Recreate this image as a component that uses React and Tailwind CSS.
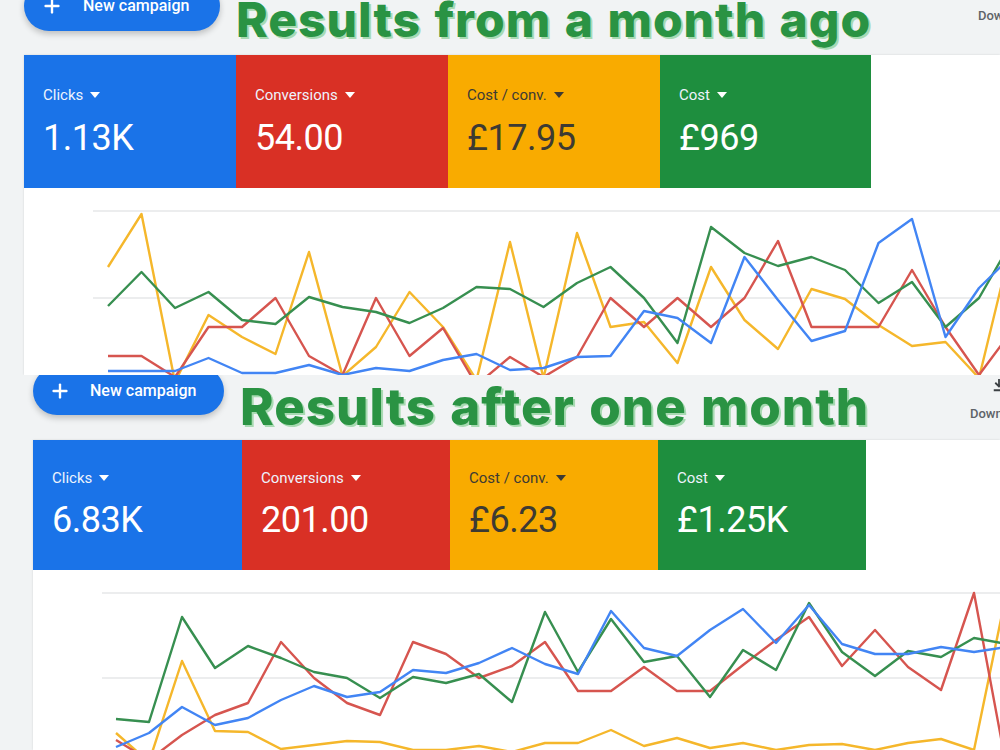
import { Plus } from "lucide-react"

const TOP = {
  x0: 108,
  step: 33.5,
  yellow: [267, 214, 382, 315, 337, 354, 252, 376, 347, 292, 327, 380, 242, 378, 233, 327, 322, 363, 267, 320, 349, 289, 299, 325, 346, 342, 378, 240],
  red: [356, 356, 377, 327, 327, 298, 356, 375, 298, 356, 328, 385, 357, 377, 357, 298, 327, 298, 327, 298, 241, 327, 327, 327, 270, 327, 375, 330],
  green: [306, 272, 308, 292, 320, 324, 297, 307, 312, 323, 308, 287, 289, 307, 283, 267, 298, 343, 227, 253, 266, 257, 270, 303, 282, 327, 298, 240],
  blue: [371, 371, 371, 358, 373, 373, 365, 375, 368, 371, 360, 354, 370, 368, 357, 356, 311, 318, 343, 257, 300, 341, 331, 243, 219, 337, 288, 255],
}

const BOTTOM = {
  x0: 116,
  step: 33,
  yellow: [733, 762, 661, 731, 732, 749, 745, 741, 742, 750, 750, 746, 752, 743, 743, 730, 746, 738, 748, 743, 750, 745, 744, 750, 743, 739, 750, 590],
  red: [740, 760, 735, 715, 703, 642, 678, 703, 715, 642, 654, 678, 666, 642, 691, 691, 667, 691, 691, 665, 640, 617, 666, 630, 667, 690, 593, 770],
  green: [719, 722, 617, 668, 646, 658, 672, 678, 698, 677, 683, 674, 702, 612, 672, 619, 662, 656, 697, 650, 670, 603, 652, 676, 651, 657, 638, 644],
  blue: [747, 733, 707, 725, 718, 700, 686, 697, 692, 670, 673, 663, 648, 664, 674, 611, 648, 656, 630, 609, 643, 605, 644, 654, 654, 647, 652, 647],
}

const LINE_COLORS = {
  yellow: "#f5b72b",
  red: "#d6554f",
  green: "#378f50",
  blue: "#4285f4",
}

function toPoints(series, x0, step) {
  return series.map((y, i) => `${x0 + step * i},${y}`).join(" ")
}

function Caret({ dark }) {
  return (
    <svg width="10" height="6" viewBox="0 0 10 6" className="shrink-0">
      <path d="M0 0h10L5 6z" fill={dark ? "#3d3a33" : "#ffffff"} />
    </svg>
  )
}

function Tile({ label, value, bg, width, pad, gap, dark }) {
  return (
    <div className={`${bg} ${width} ${pad} shrink-0 pl-[19px]`}>
      <div
        className={`flex items-center gap-[7px] text-[15px] leading-[20px] ${
          dark ? "text-[#3d3a33]" : "text-[#eef3fd]"
        }`}
      >
        <span>{label}</span>
        <Caret dark={dark} />
      </div>
      <div
        className={`${gap} text-[36px] leading-[40px] tracking-[-0.5px] ${
          dark ? "text-[#3d3a33]" : "text-white"
        }`}
      >
        {value}
      </div>
    </div>
  )
}

function DownloadIcon() {
  return (
    <svg width="18" height="18" viewBox="0 0 24 24" fill="none" stroke="#3c4043" strokeWidth="2.4">
      <path d="M12 4v10M7 9l5 5 5-5M5 19h14" />
    </svg>
  )
}

function Chart({ data, viewBox, width, height, gridY, gridX }) {
  return (
    <svg width={width} height={height} viewBox={viewBox} className="block shrink-0">
      {gridY.map((y) => (
        <line key={y} x1={gridX} x2="1000" y1={y} y2={y} stroke="#e6e7e9" strokeWidth="1.5" />
      ))}
      {["yellow", "red", "green", "blue"].map((key) => (
        <polyline
          key={key}
          points={toPoints(data[key], data.x0, data.step)}
          fill="none"
          stroke={LINE_COLORS[key]}
          strokeWidth="2.4"
          strokeLinejoin="round"
        />
      ))}
    </svg>
  )
}

export default function App() {
  return (
    <div className="w-[1000px] h-[750px] overflow-hidden bg-[#f1f3f4] font-['Roboto','Liberation_Sans',sans-serif]">
      {/* month-ago snapshot */}
      <section className="h-[375px] overflow-hidden pl-[24px]">
        <div className="flex items-start h-[55px]">
          <button className="shrink-0 w-[196px] h-[50px] mt-[-19px] rounded-full bg-[#1a73e8] shadow-[0_3px_6px_rgba(0,0,0,0.22)] flex items-center pl-[17px] gap-[20px] text-white">
            <Plus size={22} strokeWidth={2.6} />
            <span className="text-[16px] font-medium">New campaign</span>
          </button>
          <div className="shrink-0 w-[743px] ml-[16px] mt-[-4px] whitespace-nowrap font-['Inter',sans-serif] font-extrabold text-[48px] leading-none tracking-[1px] [word-spacing:2px] text-[#2a9343] [text-shadow:2px_2px_0_#a8dab2]">
            Results from a month ago
          </div>
          <div className="shrink-0 flex flex-col items-center mt-[-18px] ml-[-1px]">
            <DownloadIcon />
            <span className="mt-[6px] text-[13px] font-medium text-[#5f6368]">Download</span>
          </div>
        </div>
        <div className="bg-white shadow-[0_0_2px_rgba(0,0,0,0.12)]">
          <div className="flex h-[133px]">
            <Tile label="Clicks" value="1.13K" bg="bg-[#1a73e8]" width="w-[212px]" pad="pt-[30px]" gap="mt-[13px]" />
            <Tile label="Conversions" value="54.00" bg="bg-[#d93025]" width="w-[212px]" pad="pt-[30px]" gap="mt-[13px]" />
            <Tile label="Cost / conv." value="£17.95" bg="bg-[#f9ab00]" width="w-[212px]" pad="pt-[30px]" gap="mt-[13px]" dark />
            <Tile label="Cost" value="£969" bg="bg-[#1e8e3e]" width="w-[211px]" pad="pt-[30px]" gap="mt-[13px]" />
          </div>
          <Chart data={TOP} viewBox="24 188 976 187" width={976} height={187} gridY={[211, 298]} gridX={93} />
        </div>
      </section>

      {/* one-month-later snapshot */}
      <section className="h-[375px] overflow-hidden pl-[33px]">
        <div className="flex items-start h-[65px]">
          <button className="shrink-0 w-[191px] h-[48px] mt-[-8px] rounded-full bg-[#1a73e8] shadow-[0_3px_6px_rgba(0,0,0,0.22)] flex items-center pl-[16px] gap-[19px] text-white">
            <Plus size={22} strokeWidth={2.6} />
            <span className="text-[16px] font-medium">New campaign</span>
          </button>
          <div className="shrink-0 w-[730px] ml-[16px] mt-[6px] whitespace-nowrap font-['Inter',sans-serif] font-extrabold text-[51px] leading-none tracking-[1px] [word-spacing:2px] text-[#2a9343] [text-shadow:2px_2px_0_#a8dab2]">
            Results after one month
          </div>
          <div className="shrink-0 flex flex-col items-center mt-[1px]">
            <DownloadIcon />
            <span className="mt-[10px] text-[13px] font-medium text-[#5f6368]">Download</span>
          </div>
        </div>
        <div className="bg-white shadow-[0_0_2px_rgba(0,0,0,0.12)]">
          <div className="flex h-[130px]">
            <Tile label="Clicks" value="6.83K" bg="bg-[#1a73e8]" width="w-[209px]" pad="pt-[28px]" gap="mt-[12px]" />
            <Tile label="Conversions" value="201.00" bg="bg-[#d93025]" width="w-[208px]" pad="pt-[28px]" gap="mt-[12px]" />
            <Tile label="Cost / conv." value="£6.23" bg="bg-[#f9ab00]" width="w-[208px]" pad="pt-[28px]" gap="mt-[12px]" dark />
            <Tile label="Cost" value="£1.25K" bg="bg-[#1e8e3e]" width="w-[208px]" pad="pt-[28px]" gap="mt-[12px]" />
          </div>
          <Chart data={BOTTOM} viewBox="33 570 967 180" width={967} height={180} gridY={[593, 678]} gridX={102} />
        </div>
      </section>
    </div>
  )
}
